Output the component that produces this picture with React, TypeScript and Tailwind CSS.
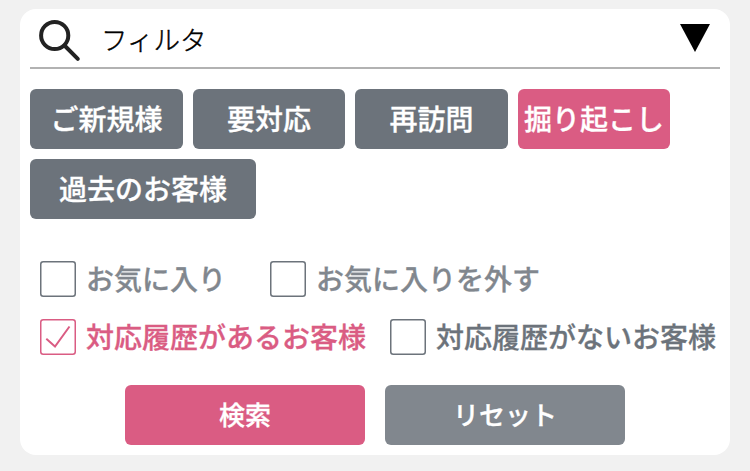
import { useState } from "react"

type Tag = {
  id: number
  label: string
  width: string
}

type CheckItemProps = {
  label: string
  checked: boolean
  color: string
  onToggle: () => void
}

const tags: Tag[] = [
  { id: 1, label: "ご新規様", width: "w-[153px]" },
  { id: 2, label: "要対応", width: "w-[152px]" },
  { id: 3, label: "再訪問", width: "w-[153px]" },
  { id: 4, label: "掘り起こし", width: "w-[152px]" },
  { id: 5, label: "過去のお客様", width: "w-[226px]" },
]

function CheckItem({ label, checked, color, onToggle }: CheckItemProps) {
  return (
    <button
      role="checkbox"
      aria-checked={checked}
      onClick={onToggle}
      className={`flex items-center gap-2.5 whitespace-nowrap text-[28px] leading-9 font-medium [-webkit-text-stroke:0.3px] ${checked ? "text-[#da5c83]" : color}`}
    >
      <svg
        viewBox="0 0 36 36"
        className={`size-9 shrink-0 ${checked ? "text-[#da5c83]" : "text-[#6c737b]"}`}
        fill="none"
        stroke="currentColor"
      >
        <rect x="0.75" y="0.75" width="34.5" height="34.5" rx="2.5" strokeWidth="1.5" />
        {checked && <path d="M6.3 19.8 L15 27.5 L29.5 7.5" strokeWidth="2" />}
      </svg>
      <span className="pb-0.5">{label}</span>
    </button>
  )
}

export default function App() {
  const [tag, setTag] = useState(4)
  const [checks, setChecks] = useState([false, false, true, false])
  const toggle = (n: number) => setChecks(checks.map((c, i) => (i === n ? !c : c)))

  return (
    <div className="h-[471px] w-[750px] bg-[#f1f1f1] px-5 pt-[9px] font-['Noto_Sans_CJK_JP',sans-serif]">
      <div className="h-[446px] rounded-[16px] bg-white px-2.5">
        <div className="flex h-[60px] items-center border-b-2 border-[#b2b2b2]">
          <svg viewBox="0 0 44 44" className="mt-1 ml-2 size-11 shrink-0" fill="none" stroke="#222" strokeWidth="4">
            <circle cx="16.7" cy="17.5" r="13.6" />
            <path d="M26.5 27.5 L39.8 40.8" strokeLinecap="round" />
          </svg>
          <h1 className="mt-0.5 ml-[19px] text-[26.5px] leading-9 font-light [-webkit-text-stroke:0.4px]">フィルタ</h1>
          <svg viewBox="0 0 30 28" className="mr-2.5 ml-auto h-7 w-[30px]">
            <path d="M0 0 H30 L15 28 Z" />
          </svg>
        </div>

        <div className="mt-5 flex flex-wrap gap-2.5">
          {tags.map(t => (
            <button
              key={t.id}
              onClick={() => setTag(t.id)}
              className={`h-[60px] rounded-[6px] pb-0.5 text-[28px] leading-9 font-medium whitespace-nowrap text-white [-webkit-text-stroke:0.3px] ${t.width} ${tag === t.id ? "bg-[#da5c83]" : "bg-[#6c737b]"}`}
            >
              {t.label}
            </button>
          ))}
        </div>

        <div className="mt-[41px] flex flex-col gap-5 pl-2.5">
          <div className="flex gap-11">
            <CheckItem label="お気に入り" checked={checks[0]} color="text-[#81878e]" onToggle={() => toggle(0)} />
            <CheckItem label="お気に入りを外す" checked={checks[1]} color="text-[#81878e]" onToggle={() => toggle(1)} />
          </div>
          <div className="flex gap-6">
            <CheckItem label="対応履歴があるお客様" checked={checks[2]} color="text-[#6c737b]" onToggle={() => toggle(2)} />
            <CheckItem label="対応履歴がないお客様" checked={checks[3]} color="text-[#6c737b]" onToggle={() => toggle(3)} />
          </div>
        </div>

        <div className="mt-[29px] flex justify-center gap-5 text-[26px] leading-9 font-medium text-white [-webkit-text-stroke:0.3px]">
          <button className="h-[60px] w-60 rounded-[6px] bg-[#da5c83] pb-0.5">検索</button>
          <button className="h-[60px] w-60 rounded-[6px] bg-[#81878e] pb-0.5">リセット</button>
        </div>
      </div>
    </div>
  )
}
